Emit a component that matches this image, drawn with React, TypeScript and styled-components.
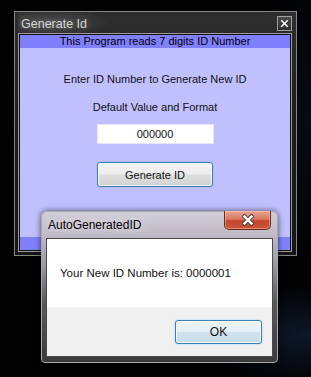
import styled, { createGlobalStyle } from "styled-components";

const GlobalStyle = createGlobalStyle`
    html, body {
        margin: 0;
        padding: 0;
        background: #000000;
    }
    body {
        font-family: "Liberation Sans", Arial, sans-serif;
        font-size: 11px;
    }
`;

const Desktop = styled.div`
    position: relative;
    width: 311px;
    height: 377px;
    overflow: hidden;
    background:
        radial-gradient(ellipse 110px 50px at 305px 335px, rgba(30, 55, 95, 0.4), transparent),
        radial-gradient(ellipse 70px 150px at 311px 120px, rgba(20, 35, 60, 0.25), transparent),
        #020203;
`;

// main "Generate Id" window, black themed
const MainWindow = styled.div`
    position: absolute;
    left: 14px;
    top: 11px;
    width: 283px;
    box-sizing: border-box;
    display: flex;
    flex-direction: column;
    border: 1px solid #858585;
    padding: 0 4px 3px 3px;
    background: linear-gradient(to bottom, #2e2e2e 0%, #1d1d1d 40%, #161616 100%);
`;

const MainTitleBar = styled.div`
    height: 21px;
    display: flex;
    align-items: flex-start;
    justify-content: space-between;
    padding-left: 3px;
    background: radial-gradient(ellipse 60px 14px at 32px 11px, rgba(120, 120, 120, 0.45), transparent);
`;

const MainTitle = styled.span`
    color: #d4d4d4;
    font-size: 12.5px;
    line-height: 14px;
    margin-top: 5px;
    text-shadow: 0 0 6px rgba(255, 255, 255, 0.25);
`;

const DarkCloseButton = styled.div`
    width: 15px;
    height: 15px;
    box-sizing: border-box;
    margin-top: 4px;
    border: 1px solid #a0a0a0;
    background: linear-gradient(to bottom, #4a4a4a, #2c2c2c);
    display: flex;
    align-items: center;
    justify-content: center;
`;

const ClientFrame = styled.div`
    border: 1px solid #9c9c9c;
    padding: 1px;
    background: #101010;
`;

const Client = styled.div`
    height: 215px;
    display: flex;
    flex-direction: column;
    background: #c0c0ff;
`;

const Band = styled.div`
    height: 13px;
    background: #8080ff;
    color: #000000;
    font-size: 11px;
    line-height: 13px;
    text-align: center;
`;

const Body = styled.div`
    flex: 1;
    display: flex;
    flex-direction: column;
    align-items: center;
`;

const Label = styled.div<{ $top: number }>`
    margin-top: ${p => p.$top}px;
    font-size: 11px;
    line-height: 14px;
    color: #111111;
`;

const TextBox = styled.div`
    margin-top: 10px;
    width: 117px;
    height: 20px;
    box-sizing: border-box;
    background: #ffffff;
    border: 1px solid #e6e6f4;
    font-size: 11px;
    line-height: 18px;
    text-align: center;
    color: #111111;
`;

const AeroButton = styled.div<{ $blue?: boolean }>`
    box-sizing: border-box;
    border: 1px solid #3c7fb1;
    border-radius: 3px;
    box-shadow: inset 0 0 0 1px rgba(255, 255, 255, 0.75), 0 0 2px rgba(110, 170, 220, 0.6);
    background: ${p => p.$blue
        ? "linear-gradient(to bottom, #eef5fa 0%, #e2eef6 48%, #cfe2ee 52%, #c5dceb 100%)"
        : "linear-gradient(to bottom, #f4f4f4 0%, #ececec 48%, #dedede 52%, #d2d2d2 100%)"};
    color: #111111;
    display: flex;
    align-items: center;
    justify-content: center;
`;

const GenerateButton = styled(AeroButton)`
    margin-top: 18px;
    width: 116px;
    height: 25px;
    font-size: 11px;
`;

// the message box on top
const Dialog = styled.div`
    position: absolute;
    left: 41px;
    top: 211px;
    width: 237px;
    box-sizing: border-box;
    display: flex;
    flex-direction: column;
    border: 1px solid #a9a9a9;
    border-radius: 6px 6px 4px 4px;
    padding: 0 4px 5px 4px;
    background: linear-gradient(to bottom, #d2ced8 0%, #bcb6c4 18%, #9c98a4 35%, #5a5a5a 60%, #3a3a3a 100%);
    box-shadow: 0 0 6px rgba(0, 0, 0, 0.6);
`;

const DialogTitleBar = styled.div`
    height: 26px;
    display: flex;
    align-items: flex-start;
    justify-content: space-between;
    padding-left: 2px;
    padding-right: 2px;
`;

const DialogTitle = styled.span`
    margin-top: 6px;
    font-size: 12px;
    line-height: 14px;
    color: #000000;
    text-shadow: 0 0 8px rgba(255, 255, 255, 0.9);
`;

const RedCloseButton = styled.div`
    width: 47px;
    height: 19px;
    margin-top: -1px;
    box-sizing: border-box;
    border: 1px solid #6a2a20;
    border-top: none;
    border-radius: 0 0 5px 5px;
    background: linear-gradient(to bottom, #e9a694 0%, #d7785f 45%, #c2462c 55%, #c9563a 100%);
    box-shadow: inset 0 0 0 1px rgba(255, 200, 180, 0.5);
    display: flex;
    align-items: center;
    justify-content: center;
`;

const DialogInner = styled.div`
    border: 1px solid #4a4a4a;
    display: flex;
    flex-direction: column;
`;

const MessageArea = styled.div`
    height: 68px;
    background: #ffffff;
    display: flex;
    align-items: center;
    padding-left: 13px;
    font-size: 11.5px;
    color: #111111;
`;

const ButtonArea = styled.div`
    height: 49px;
    box-sizing: border-box;
    background: #f0f0f0;
    display: flex;
    justify-content: flex-end;
    align-items: flex-start;
    padding: 13px 10px 0 0;
`;

const OkButton = styled(AeroButton)`
    width: 87px;
    height: 24px;
    font-size: 12px;
`;

const CrossIcon = ({ size, stroke }: { size: number, stroke: number }) => (
    <svg width={size} height={size} viewBox="0 0 10 10">
        <path d="M2 2 L8 8 M8 2 L2 8" stroke="#3a3a3a" strokeWidth={stroke + 1.4} strokeLinecap="square" />
        <path d="M2 2 L8 8 M8 2 L2 8" stroke="#ffffff" strokeWidth={stroke} strokeLinecap="square" />
    </svg>
);

const App = () => {
    return (
        <Desktop>
            <GlobalStyle />
            <MainWindow>
                <MainTitleBar>
                    <MainTitle>Generate Id</MainTitle>
                    <DarkCloseButton>
                        <CrossIcon size={9} stroke={1.8} />
                    </DarkCloseButton>
                </MainTitleBar>
                <ClientFrame>
                    <Client>
                        <Band>This Program reads 7 digits ID Number</Band>
                        <Body>
                            <Label $top={24}>Enter ID Number to Generate New ID</Label>
                            <Label $top={14}>Default Value and Format</Label>
                            <TextBox>000000</TextBox>
                            <GenerateButton>Generate ID</GenerateButton>
                        </Body>
                        <Band />
                    </Client>
                </ClientFrame>
            </MainWindow>

            <Dialog>
                <DialogTitleBar>
                    <DialogTitle>AutoGeneratedID</DialogTitle>
                    <RedCloseButton>
                        <CrossIcon size={12} stroke={2} />
                    </RedCloseButton>
                </DialogTitleBar>
                <DialogInner>
                    <MessageArea>Your New ID Number is: 0000001</MessageArea>
                    <ButtonArea>
                        <OkButton $blue>OK</OkButton>
                    </ButtonArea>
                </DialogInner>
            </Dialog>
        </Desktop>
    );
}

export default App
